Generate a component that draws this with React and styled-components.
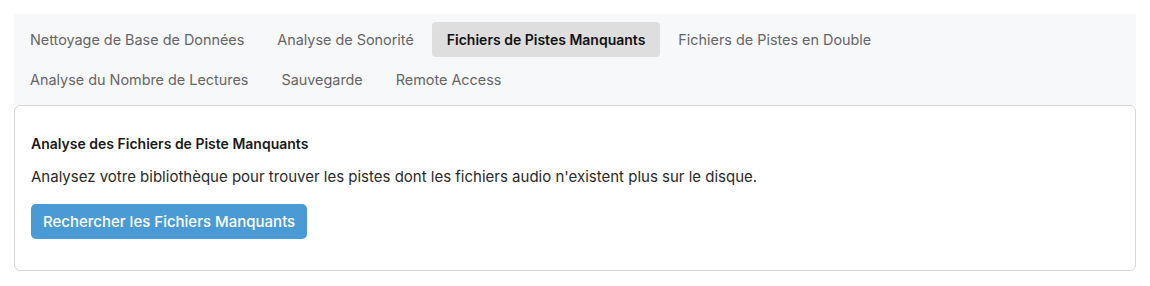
import React, { useState } from "react";
import styled, { createGlobalStyle } from "styled-components";

const Global = createGlobalStyle`
  html, body { margin: 0; padding: 0; background: #ffffff; }
  body { font-family: Inter, "Noto Sans", sans-serif; font-size: 14px; color: #222; }
  * { box-sizing: border-box; }
`;

const Page = styled.div`
  padding: 14px;
`;

const TabBar = styled.div`
  display: flex;
  flex-wrap: wrap;
  column-gap: 3px;
  row-gap: 5px;
  padding: 8px 1px;
  background: #f7f8fa;
`;

const Tab = styled.button`
  border: none;
  background: ${(p) => (p.$active ? "#dedede" : "transparent")};
  color: ${(p) => (p.$active ? "#111111" : "#666666")};
  font-family: inherit;
  font-size: ${(p) => (p.$active ? "14px" : "14.4px")};
  font-weight: ${(p) => (p.$active ? 600 : 400)};
  line-height: 19px;
  padding: 8px 15px;
  border-radius: 4px;
  cursor: pointer;
`;

const Card = styled.div`
  border: 1px solid #d6d6d6;
  border-radius: 6px;
  padding: 28px 16px 31px;
  background: #fff;
`;

const Title = styled.h3`
  margin: 0;
  font-size: 14px;
  font-weight: 600;
  line-height: 20px;
  color: #1a1a1a;
`;

const Text = styled.p`
  margin: 13px 0 0;
  font-size: 15px;
  line-height: 20px;
  color: #2a2a2a;
`;

const Button = styled.button`
  margin-top: 17px;
  height: 35px;
  padding: 0 12px;
  border: none;
  border-radius: 5px;
  background: #4a9bd5;
  color: #ffffff;
  font-family: inherit;
  font-size: 15px;
  font-weight: 500;
  cursor: pointer;
`;

const tabs = [
  "Nettoyage de Base de Données",
  "Analyse de Sonorité",
  "Fichiers de Pistes Manquants",
  "Fichiers de Pistes en Double",
  "Analyse du Nombre de Lectures",
  "Sauvegarde",
  "Remote Access",
];

export default function App() {
  const [active, setActive] = useState(2);
  return (
    <Page>
      <Global />
      <TabBar>
        {tabs.map((t, i) => (
          <Tab key={t} $active={i === active} onClick={() => setActive(i)}>
            {t}
          </Tab>
        ))}
      </TabBar>
      <Card>
        <Title>Analyse des Fichiers de Piste Manquants</Title>
        <Text>
          Analysez votre bibliothèque pour trouver les pistes dont les fichiers audio n'existent plus sur le disque.
        </Text>
        <Button>Rechercher les Fichiers Manquants</Button>
      </Card>
    </Page>
  );
}
